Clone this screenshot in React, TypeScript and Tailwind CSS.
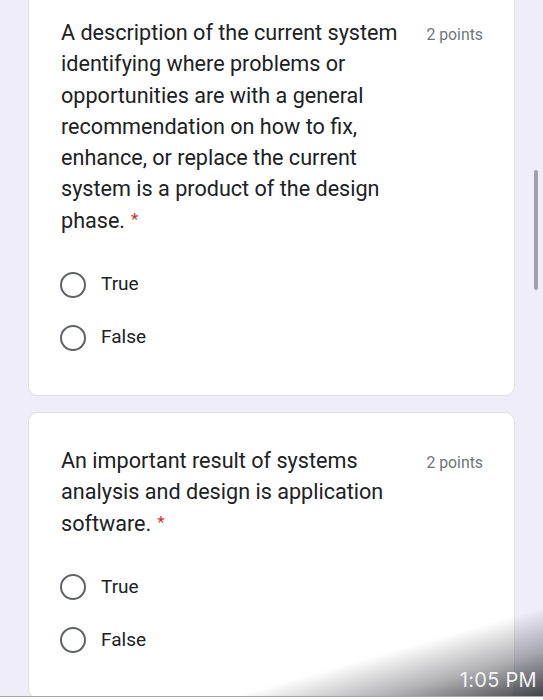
import React from "react";

const Radio = ({ label }: { label: string }) => (
  <div className="flex items-center h-[53px]">
    <div className="w-[26px] h-[26px] rounded-full border-[2.5px] border-[#5f6368] ml-[-1px]" />
    <span className="ml-[15px] text-[19px] text-[#202124]">{label}</span>
  </div>
);

const Card = ({
  lines,
  className,
}: {
  lines: string;
  className?: string;
}) => (
  <div className={`bg-white rounded-[10px] border border-[#e0e0e6] pl-[32px] pr-[31px] pt-[32px] pb-[31px] ${className ?? ""}`}>
    <div className="flex items-start justify-between">
      <div className="w-[348px] text-[21.6px] leading-[31.3px] text-[#202124]">
        {lines}
        <span className="text-[#d93025] text-[17px] ml-[6px] relative top-[-3px]">*</span>
      </div>
      <div className="text-[15.8px] leading-[31px] text-[#70757a] pt-[2px]">2 points</div>
    </div>
    <div className="mt-[20px]">
      <Radio label="True" />
      <Radio label="False" />
    </div>
  </div>
);

export default function App() {
  return (
    <div
      className="relative w-[543px] h-[700px] overflow-hidden bg-[#eeedf8]"
      style={{ fontFamily: "Roboto, 'Noto Sans', sans-serif" }}
    >
      <div className="px-[28px] flex flex-col gap-[16px]">
        <Card
          className="mt-[-16px]"
          lines="A description of the current system identifying where problems or opportunities are with a general recommendation on how to fix, enhance, or replace the current system is a product of the design phase."
        />
        <Card lines="An important result of systems analysis and design is application software." />
      </div>

      {/* scrollbar */}
      <div className="absolute left-[534px] top-[170px] w-[4px] h-[120px] rounded-full bg-[#a19fab]" />

      {/* photo shadow overlay */}
      <div className="absolute right-0 bottom-[3px] w-[343px] h-[110px] bg-[linear-gradient(164deg,transparent_57%,rgba(60,60,66,0.4)_78%,rgba(40,40,46,0.88))]" />
      <div className="absolute right-[6px] bottom-[5px] text-[20px] text-[#f2f2f2] tracking-[0.3px]" style={{ fontFamily: "Inter, Roboto, sans-serif" }}>
        1:05 PM
      </div>

      {/* bottom edge */}
      <div className="absolute left-0 bottom-0 w-[543px] h-[4px] bg-white border-t-[1.5px] border-[#a8a8a8]" />
    </div>
  );
}
